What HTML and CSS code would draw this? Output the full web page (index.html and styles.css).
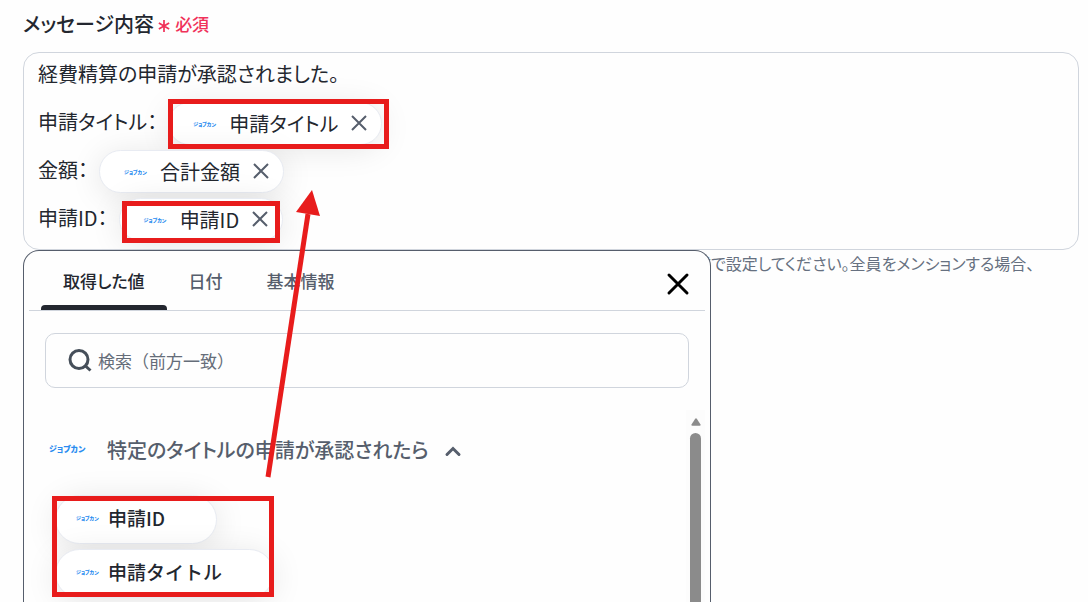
FILE: index.html
```html
<!DOCTYPE html>
<html lang="ja">
<head>
<meta charset="utf-8">
<title>メッセージ内容</title>
<link rel="stylesheet" href="styles.css">
</head>
<body>
<main class="field">
  <div class="field-label">
    <span id="message-label">メッセージ内容</span>
    <svg class="asterisk" viewBox="0 0 14 14" aria-hidden="true"><path d="M7 0v14M1 3.500l12 7M13 3.500l-12 7"/></svg>
    <span class="required">必須</span>
  </div>

  <div class="editor-wrap">
    <div class="editor" role="textbox" aria-multiline="true" aria-labelledby="message-label" contenteditable="true" spellcheck="false">
      <div class="line">経費精算の申請が承認されました。</div>
      <div class="line">申請タイトル：<span class="chip"><span class="brand">ジョブカン</span>申請タイトル<button class="chip-remove" type="button" aria-label="申請タイトルを削除"><svg viewBox="0 0 16 16"><path d="M1 1l14 14M15 1L1 15"/></svg></button></span></div>
      <div class="line">金額：<span class="chip"><span class="brand">ジョブカン</span>合計金額<button class="chip-remove" type="button" aria-label="合計金額を削除"><svg viewBox="0 0 16 16"><path d="M1 1l14 14M15 1L1 15"/></svg></button></span></div>
      <div class="line">申請ID：<span class="chip"><span class="brand">ジョブカン</span>申請ID<button class="chip-remove" type="button" aria-label="申請IDを削除"><svg viewBox="0 0 16 16"><path d="M1 1l14 14M15 1L1 15"/></svg></button></span></div>
    </div>

    <section class="picker">
      <header class="picker-head">
        <div class="tabs" role="tablist">
          <button class="tab tab-active" type="button" role="tab" aria-selected="true">取得した値</button>
          <button class="tab" type="button" role="tab" aria-selected="false">日付</button>
          <button class="tab" type="button" role="tab" aria-selected="false">基本情報</button>
        </div>
        <button class="close" type="button" aria-label="閉じる"><svg viewBox="0 0 20 20"><path d="M1 1l18 18M19 1L1 19"/></svg></button>
      </header>
      <label class="search">
        <svg viewBox="0 0 24 24" aria-hidden="true"><circle cx="11" cy="10.5" r="9"/><path d="M17.5 17l5 4.5"/></svg>
        <input type="search" aria-label="検索" placeholder="検索（前方一致）">
      </label>
      <div class="results">
        <div class="result-list">
          <button class="group" type="button" aria-expanded="true">
            <span class="brand brand-large">ジョブカン</span>
            <span>特定のタイトルの申請が承認されたら</span>
            <svg viewBox="0 0 16 10"><path d="M2 8.500l6-6 6 6"/></svg>
          </button>
          <button class="option" type="button"><span class="brand">ジョブカン</span>申請ID</button>
          <button class="option" type="button"><span class="brand">ジョブカン</span>申請タイトル</button>
        </div>
        <div class="scrollbar" aria-hidden="true">
          <svg viewBox="0 0 10 8"><path d="M4.200 .8q.8-1 1.600 0L9.500 6.500q.5 1.300-1 1.300h-7q-1.500 0-1-1.300z"/></svg>
          <div class="thumb"></div>
        </div>
      </div>
    </section>
  </div>

  <p class="help">式で設定してください。全員をメンションする場合、</p>
</main>

<div class="mark mark-title"></div>
<div class="mark mark-id"></div>
<div class="mark mark-options"></div>
<svg class="arrow" viewBox="0 0 54 288" aria-hidden="true"><path class="shaft" d="M3 287L43 24"/><path class="head" d="M47 0L55 26 31 22z"/></svg>
</body>
</html>
```
FILE: styles.css
```css
* { box-sizing: border-box; }

body {
  margin: 0;
  height: 100vh;
  overflow: hidden;
  background: #fefefe;
  color: #23272f;
  font-family: "Noto Sans CJK JP", sans-serif;
  font-size: 20px;
  font-feature-settings: "palt";
}

button, input {
  font: inherit;
  font-feature-settings: inherit;
  color: inherit;
  border: 0;
  padding: 0;
  background: none;
}

svg { fill: none; stroke: currentColor; flex: none; display: block; overflow: visible; }

.field { padding: 8px 9px 0 23px; }

.field-label {
  display: flex;
  align-items: center;
  height: 44px;
  padding-bottom: 14px;
  font-weight: 500;
}

.asterisk { width: 12px; height: 12px; margin: 6px 5px 0 4px; color: #f0325a; stroke-width: 2; }
.required { color: #f0325a; font-size: 17px; }

.editor-wrap { position: relative; }

.editor {
  padding: 0 14px 4px;
  border: 1px solid #d0d5dd;
  border-radius: 16px;
  outline: 0;
}

.line { display: flex; align-items: center; height: 48px; padding-bottom: 8px; white-space: nowrap; }

.chip {
  display: inline-flex;
  align-items: center;
  height: 43px;
  margin: 4px 0 0 11px;
  padding: 0 14px 0 24px;
  border: 1px solid #e8ebf2;
  border-radius: 22px;
  background: #fff;
  box-shadow: 0 4px 32px rgba(0, 0, 0, 0.1);
}

.brand { width: 22px; margin-right: 14px; color: #2a8cf0; font-size: 5px; font-weight: 900; line-height: 1; white-space: nowrap; text-align: left; font-feature-settings: "palt"; }
.brand-large { width: 36px; margin-right: 22px; font-size: 8px; }

.chip-remove { margin-left: 13px; color: #565e6c; }
.chip-remove svg { width: 16px; height: 16px; stroke-width: 2; }

.help { margin: 0 0 0 672px; color: #667080; font-size: 16px; line-height: 26px; white-space: nowrap; }

.picker {
  position: absolute;
  z-index: 1;
  top: 198px;
  left: 0;
  display: flex;
  flex-direction: column;
  width: 688px;
  height: calc(100vh - 250px);
  padding: 0 5px;
  border: 1px solid #565e6c;
  border-bottom: 0;
  border-radius: 16px 16px 0 0;
  background: #fefefe;
}

.picker-head {
  display: flex;
  flex: none;
  justify-content: space-between;
  height: 60px;
  padding: 0 17px 0 12px;
  border-bottom: 1px solid #d0d5dd;
}

.tabs { display: flex; }
.tab { position: relative; padding: 0 22px; color: #565e6c; font-size: 17px; font-weight: 500; }
.tab-active { color: #23272f; }
.tab-active::after {
  content: "";
  position: absolute;
  right: 0;
  bottom: 0;
  left: 0;
  height: 5px;
  border-radius: 4px 4px 0 0;
  background: #23272f;
}

.close { padding-top: 6px; color: #000; }
.close svg { width: 20px; height: 20px; stroke-width: 3; stroke-linecap: round; }

.search {
  display: flex;
  flex: none;
  align-items: center;
  gap: 6px;
  height: 55px;
  margin: 22px 16px 0;
  padding: 0 22px;
  border: 1px solid #d0d5dd;
  border-radius: 10px;
}
.search svg { width: 24px; height: 24px; color: #454e59; stroke-width: 3; }
.search input { flex: 1; min-width: 0; outline: 0; font-size: 17px; line-height: 24px; font-feature-settings: normal; }
.search input::placeholder { color: #656d79; opacity: 1; }

.results { display: flex; flex: 1; min-height: 0; margin-top: 22px; overflow: hidden; }
.result-list { flex: 1; display: flex; flex-direction: column; align-items: flex-start; gap: 5px; padding: 20px 20px 0; overflow: hidden; }

.group { display: flex; flex: none; align-items: center; height: 38px; margin-bottom: 22px; color: #565e6c; font-weight: 500; white-space: nowrap; }
.group > svg { width: 16px; height: 10px; margin: 4px 0 0 16px; stroke-width: 3; stroke-linecap: round; }

.option {
  display: flex;
  flex: none;
  align-items: center;
  height: 49px;
  margin-left: 6px;
  padding: 0 51px 4px 20px;
  border: 1px solid #e8ebf2;
  border-radius: 25px;
  background: #fff;
  box-shadow: 0 4px 32px rgba(0, 0, 0, 0.1);
  font-size: 19px;
  font-weight: 500;
  font-feature-settings: normal;
}
.option .brand { margin-right: 10px; }

.scrollbar { display: flex; flex-direction: column; width: 19px; padding-top: 8px; background: #fcfcfc; }
.scrollbar svg { width: 10px; height: 8px; margin: 0 auto 7px; fill: #8b8b8b; stroke: none; }
.thumb { flex: 1; width: 11px; margin: 0 auto; border-radius: 6px 6px 0 0; background: #8b8b8b; }

.mark { position: absolute; z-index: 2; border: 5px solid #e81c1c; pointer-events: none; }
.mark-title { top: 99px; left: 168px; width: 221px; height: 50px; }
.mark-id { top: 201px; left: 122px; width: 158px; height: 42px; }
.mark-options { top: 496px; left: 52px; width: 222px; height: 101px; }

.arrow { position: absolute; z-index: 2; top: 190px; left: 265px; width: 54px; height: 288px; pointer-events: none; }
.shaft { stroke: #e81c1c; stroke-width: 5; }
.head { fill: #e81c1c; stroke: none; }
```
